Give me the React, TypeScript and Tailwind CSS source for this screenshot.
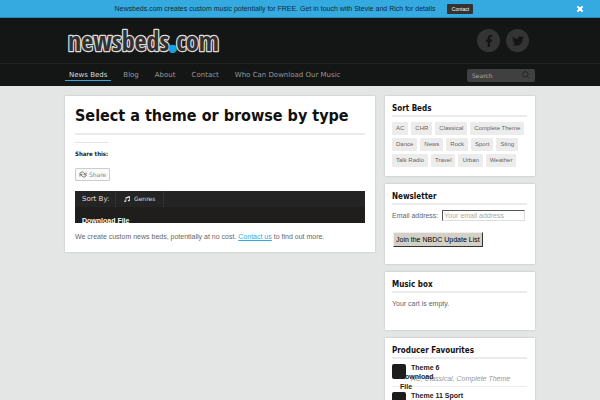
import React, { ReactNode } from "react";
import { FaFacebookF, FaTwitter, FaTimes, FaMusic } from "react-icons/fa";

interface WidgetProps {
  title: string;
  style?: string;
  children: ReactNode;
}

const navItems = ["News Beds", "Blog", "About", "Contact", "Who Can Download Our Music"];

const tags = [
  "AC",
  "CHR",
  "Classical",
  "Complete Theme",
  "Dance",
  "News",
  "Rock",
  "Sport",
  "Sting",
  "Talk Radio",
  "Travel",
  "Urban",
  "Weather",
];

// stroke goes under the fill, so the letters keep a light rim and a dark core
const Logo = () => (
  <svg
    viewBox="0 0 158 36"
    className="h-9 w-[158px]"
    fontFamily="'Open Sans Condensed', 'Noto Sans Condensed', 'Roboto Condensed', 'Open Sans', sans-serif"
    fontSize="26"
  >
    <text
      x="3"
      y="28"
      fill="#303030"
      stroke="#dcdcdc"
      strokeWidth="2.5"
      strokeLinejoin="round"
      paintOrder="stroke"
    >
      newsbeds
      <tspan fill="#1a9fe0" stroke="#1a9fe0" strokeWidth="4">
        .
      </tspan>
      com
    </text>
  </svg>
);

const SearchIcon = () => (
  <svg viewBox="0 0 10 10" className="h-2 w-2" fill="none" stroke="#222" strokeWidth="1.1">
    <circle cx="4.2" cy="4.2" r="3.4" />
    <path d="M6.7 6.7 9.4 9.4" />
  </svg>
);

const ShareIcon = () => (
  <svg viewBox="0 0 16 14" className="h-[7px] w-2" fill="none" stroke="#666" strokeWidth="1.8">
    <path d="M1 6C3 1 8 1 10 4L13 7" />
    <path d="M9 7.500h5V3" />
    <path d="M15 8C13 13 8 13 6 10L3 7" />
    <path d="M7 6.500H2V11" />
  </svg>
);

const Widget = ({ title, style, children }: WidgetProps) => (
  <section className={`${style || ""} bg-white pt-2 pr-2 pl-[7px] shadow-[0_0_2px_#00000030]`}>
    <h3 className="border-b-2 border-[#ebebeb] pb-[2px] font-['DejaVu_Sans_Condensed','DejaVu_Sans',sans-serif] text-[8px] leading-[9px] font-bold text-[#111]">
      {title}
    </h3>
    {children}
  </section>
);

const App = () => {
  return (
    <div className="h-screen overflow-hidden bg-[#e4e6e5] font-['Liberation_Sans',Arial,sans-serif] text-[7px] leading-[11px] text-[#666]">
      <div className="flex h-[18px] items-center border-b border-[#2b86b4] bg-[#35aae1]">
        <div className="flex flex-1 items-center justify-center gap-3 pl-3 text-[#102a38]">
          <p>Newsbeds.com creates custom music potentially for FREE. Get in touch with Stevie and Rich for details</p>
          <button className="h-[10px] w-[26px] rounded-[1px] bg-[#333] text-[5px] leading-[10px] text-white">
            Contact
          </button>
        </div>
        <button aria-label="Close" className="mr-4 text-white">
          <FaTimes className="h-2 w-2 stroke-white stroke-[60]" />
        </button>
      </div>

      <header className="bg-[#141515]">
        <div className="mx-auto flex h-[45px] max-w-[470px] items-center justify-between">
          <a href="#">
            <Logo />
          </a>
          <div className="flex gap-[6px] pr-[6px] text-[#141515]">
            <a
              href="#"
              aria-label="Facebook"
              className="flex h-[23px] w-[23px] items-center justify-center rounded-full bg-[#343434]"
            >
              <FaFacebookF className="h-3 w-3" />
            </a>
            <a
              href="#"
              aria-label="Twitter"
              className="flex h-[23px] w-[23px] items-center justify-center rounded-full bg-[#343434]"
            >
              <FaTwitter className="h-3 w-3" />
            </a>
          </div>
        </div>
        <div className="border-t border-[#222]">
          <div className="mx-auto flex h-[22px] max-w-[470px] items-center justify-between">
            <nav className="flex gap-2 font-['DejaVu_Sans',sans-serif] leading-[10px]">
              {navItems.map((item, index) => (
                <a
                  key={item}
                  href="#"
                  className={`border-b pt-px px-1 ${index === 0 ? "border-b-[#35aae1] text-[#ddd]" : "border-b-transparent text-[#999]"}`}
                >
                  {item}
                </a>
              ))}
            </nav>
            <label className="flex h-[13px] w-[68px] items-center rounded-[2px] bg-[#404040] px-[5px]">
              <input
                aria-label="Search"
                placeholder="Search"
                className="w-full min-w-0 flex-1 font-['DejaVu_Sans',sans-serif] text-[6px] placeholder:text-[#aaa]"
              />
              <SearchIcon />
            </label>
          </div>
        </div>
      </header>

      <div className="mx-auto flex max-w-[470px] items-start gap-[10px] pt-[10px]">
        <main className="min-w-0 flex-1 bg-white px-[10px] pt-[10px] pb-[10px] shadow-[0_0_2px_#00000030]">
          <h1 className="border-b-2 border-[#ebebeb] pb-[7px] font-['DejaVu_Sans_Condensed','DejaVu_Sans',sans-serif] text-[16px] leading-[20px] font-bold text-[#111]">
            Select a theme or browse by type
          </h1>
          <div className="mt-[7px] w-[33px] border-t border-[#e5e5e5] pt-[5px] font-['DejaVu_Sans_Condensed','DejaVu_Sans',sans-serif] text-[6px] font-bold whitespace-nowrap text-[#222]">
            Share this:
          </div>
          <button className="mt-[9px] flex h-[13px] items-center gap-[2px] rounded-[1px] border border-[#ccc] bg-[#fafafa] px-[3px] font-['DejaVu_Sans',sans-serif] text-[6px] text-[#888]">
            <ShareIcon />
            Share
          </button>
          <div className="mt-[10px] h-8 overflow-hidden bg-[#1f1e1c] text-[#ddd]">
            <div className="flex h-4 bg-[#242424] font-['DejaVu_Sans',sans-serif] text-[6px] leading-4">
              <span className="w-[41px] border-r border-[#333] pl-[7px] text-[7px]">Sort By:</span>
              <button className="flex w-12 items-center gap-1 border-r border-[#333] pl-2">
                <FaMusic className="h-[6px] w-[6px]" />
                Genres
              </button>
            </div>
            <p className="px-[7px] pt-2 font-bold text-white">Download File</p>
          </div>
          <p className="mt-2">
            We create custom news beds, potentially at no cost.{" "}
            <a href="#" className="text-[#35aae1] underline">
              Contact us
            </a>{" "}
            to find out more.
          </p>
        </main>

        <aside className="flex w-[150px] flex-col gap-2">
          <Widget title="Sort Beds" style="h-[80px]">
            <div className="mt-[5px] flex flex-wrap gap-[3px] text-[6px] leading-[13px]">
              {tags.map((tag) => (
                <a key={tag} href="#" className="rounded-[1px] bg-[#ececec] px-1">
                  {tag}
                </a>
              ))}
            </div>
          </Widget>
          <Widget title="Newsletter" style="h-[80px]">
            <form>
              <div className="mt-[5px] flex items-center gap-1">
                <label htmlFor="email">Email address:</label>
                <input
                  id="email"
                  placeholder="Your email address"
                  className="h-[11px] w-[83px] border border-t-[#555] border-r-[#ddd] border-b-[#ddd] border-l-[#555] px-px placeholder:text-[#aaa]"
                />
              </div>
              <button
                type="button"
                className="mt-[11px] ml-px h-[15px] border border-t-[#eee] border-r-[#333] border-b-[#333] border-l-[#eee] bg-[#d4d0c8] px-[2px] text-black"
              >
                Join the NBDC Update List
              </button>
            </form>
          </Widget>
          <Widget title="Music box" style="h-[58px]">
            <p className="mt-[5px]">Your cart is empty.</p>
          </Widget>
          <Widget title="Producer Favourites" style="h-[90px]">
            <ul className="mt-[5px] text-[#222]">
              <li className="relative mb-[5px] flex h-[23px] gap-[5px] border-b border-[#eee]">
                <div className="h-[15px] w-[14px] rounded-[2px] bg-[#1d1d1d]" />
                <div className="leading-[8px]">
                  <a href="#" className="font-bold">
                    Theme 6
                  </a>
                  <p className="mt-[3px] text-[#999] italic">AC, Classical, Complete Theme</p>
                </div>
                <a href="#" className="absolute top-[8px] left-2 w-9 leading-[10px] font-bold">
                  Download File
                </a>
              </li>
              <li className="flex gap-[5px]">
                <div className="h-[15px] w-[14px] rounded-[2px] bg-[#1d1d1d]" />
                <a href="#" className="leading-[8px] font-bold">
                  Theme 11 Sport
                </a>
              </li>
            </ul>
          </Widget>
        </aside>
      </div>
    </div>
  );
};

export default App;
